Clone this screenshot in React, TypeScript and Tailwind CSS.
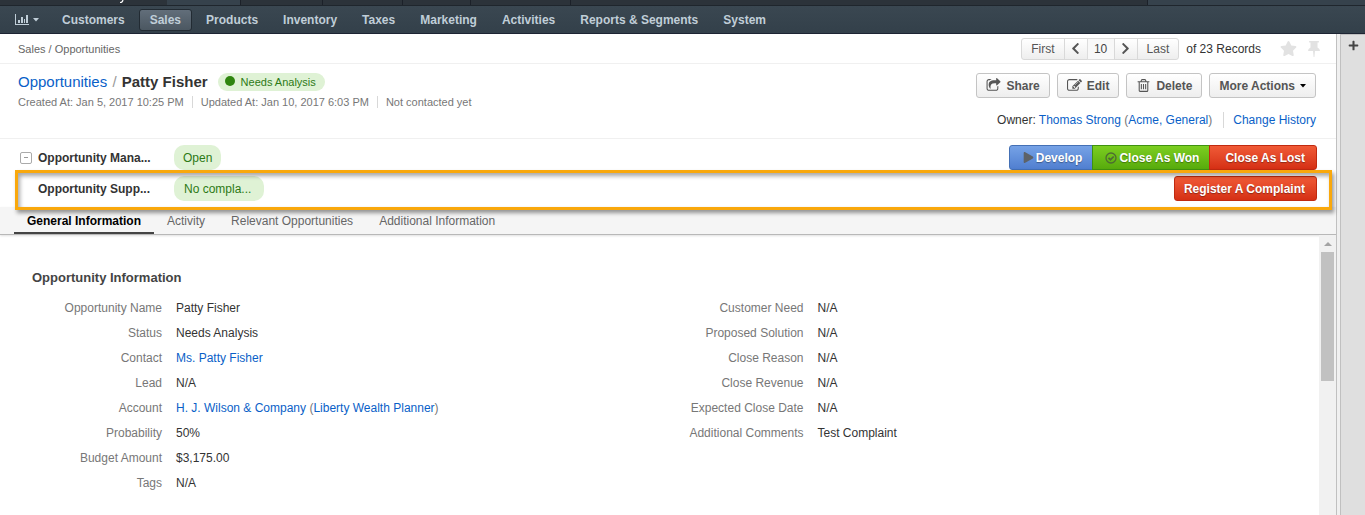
import type { ReactNode } from 'react';
import { FaChevronLeft, FaChevronRight, FaPlay, FaPlus, FaStar } from 'react-icons/fa';

const NAV = ['Customers', 'Sales', 'Products', 'Inventory', 'Taxes', 'Marketing', 'Activities', 'Reports & Segments', 'System'];
const TABS = ['General Information', 'Activity', 'Relevant Opportunities', 'Additional Information'];

type Field = { label: string; value: ReactNode };

const LINK = 'text-[#0a5fc8] hover:underline';

const LEFT: Field[] = [
  { label: 'Opportunity Name', value: 'Patty Fisher' },
  { label: 'Status', value: 'Needs Analysis' },
  { label: 'Contact', value: <a href="#contact" className={LINK}>Ms. Patty Fisher</a> },
  { label: 'Lead', value: 'N/A' },
  {
    label: 'Account',
    value: (
      <>
        <a href="#account" className={LINK}>H. J. Wilson &amp; Company</a>{' '}
        <span className="text-[#777]">(</span>
        <a href="#organization" className={LINK}>Liberty Wealth Planner</a>
        <span className="text-[#777]">)</span>
      </>
    ),
  },
  { label: 'Probability', value: '50%' },
  { label: 'Budget Amount', value: '$3,175.00' },
  { label: 'Tags', value: 'N/A' },
];

const RIGHT: Field[] = [
  { label: 'Customer Need', value: 'N/A' },
  { label: 'Proposed Solution', value: 'N/A' },
  { label: 'Close Reason', value: 'N/A' },
  { label: 'Close Revenue', value: 'N/A' },
  { label: 'Expected Close Date', value: 'N/A' },
  { label: 'Additional Comments', value: 'Test Complaint' },
];

function ChartIcon() {
  return (
    <svg width="15" height="12" viewBox="0 0 15 12" fill="currentColor" aria-hidden="true">
      <path d="M0 0h1v10h13v1H0zM3 6h2v3H3zM6 3h2v6H6zM9 5h1v4H9zM11 1h2v8h-2z" />
    </svg>
  );
}

function Caret() {
  return (
    <svg width="6" height="4" viewBox="0 0 6 4" fill="currentColor" aria-hidden="true">
      <path d="M0 0h6L3 3.5z" />
    </svg>
  );
}

function Glyph({ d }: { d: string }) {
  return (
    <svg width="15" height="15" viewBox="0 0 1792 1792" fill="currentColor" aria-hidden="true">
      <path d={d} />
    </svg>
  );
}

const SHARE =
  'M1472 989v259q0 119-84.5 203.5t-203.5 84.5h-832q-119 0-203.5-84.5t-84.5-203.5v-832q0-119 84.5-203.5t203.5-84.5h255q13 0 22.5 9.5t9.5 22.5q0 27-26 32-77 26-133 60-10 4-16 4h-112q-66 0-113 47t-47 113v832q0 66 47 113t113 47h832q66 0 113-47t47-113v-214q0-19 18-29 28-13 54-37 16-16 35-8 21 9 21 31zm237-496l-384 384q-18 19-45 19-12 0-25-5-39-17-39-59v-192h-160q-323 0-438 131-119 137-74 473 3 23-20 34-8 2-12 2-16 0-26-13-10-14-21-31t-39.5-68.5-49.5-99.5-38.5-114-17.5-122q0-49 3.5-91t14-90 28-88 47-81.5 68.5-74 94.5-61.5 124.500-48.500 159.500-30.500 196.500-11h160v-192q0-42 39-59 13-5 25-5 26 0 45 19l384 384q19 19 19 45t-19 45z';
const EDIT =
  'M888 1184l116-116-152-152-116 116v56h96v96h56zm440-720q-16-16-33 1l-350 350q-17 17-1 33t33-1l350-350q17-17 1-33zm80 594v190q0 119-84.5 203.5t-203.5 84.5h-832q-119 0-203.5-84.5t-84.5-203.5v-832q0-119 84.5-203.5t203.5-84.5h832q63 0 117 25 15 7 18 23 3 17-9 29l-49 49q-14 14-32 8-23-6-45-6h-832q-66 0-113 47t-47 113v832q0 66 47 113t113 47h832q66 0 113-47t47-113v-126q0-13 9-22l64-64q15-15 35-7t20 29zm-96-738l288 288-672 672h-288v-288zm444 132l-92 92-288-288 92-92q28-28 68-28t68 28l152 152q28 28 28 68t-28 68z';
const TRASH =
  'M704 736v576q0 14-9 23t-23 9h-64q-14 0-23-9t-9-23v-576q0-14 9-23t23-9h64q14 0 23 9t9 23zm256 0v576q0 14-9 23t-23 9h-64q-14 0-23-9t-9-23v-576q0-14 9-23t23-9h64q14 0 23 9t9 23zm256 0v576q0 14-9 23t-23 9h-64q-14 0-23-9t-9-23v-576q0-14 9-23t23-9h64q14 0 23 9t9 23zm128 724v-948h-896v948q0 22 7 40.5t14.5 27 10.5 8.5h832q3 0 10.500-8.500t14.500-27 7-40.500zm-672-1076h448l-48-117q-7-9-17-11h-317q-10 2-17 11zm928 32v64q0 14-9 23t-23 9h-96v948q0 83-47 143.500t-113 60.500h-832q-66 0-113-58.500t-47-141.500v-952h-96q-14 0-23-9t-9-23v-64q0-14 9-23t23-9h309l70-167q15-37 54-63t79-26h320q40 0 79 26t54 63l70 167h309q14 0 23 9t9 23z';

function CheckCircle() {
  return (
    <svg width="12" height="12" viewBox="0 0 12 12" fill="none" stroke="currentColor" aria-hidden="true">
      <circle cx="6" cy="6" r="5" strokeWidth="1.300" />
      <path d="M3.500 5.800L5.500 7.700L8.700 4.500" strokeWidth="1.700" />
    </svg>
  );
}

function PinIcon() {
  return (
    <svg width="12" height="16" viewBox="0 0 12 16" fill="currentColor" aria-hidden="true">
      <path d="M1.500 0h9q.5 0 .5.7T10.500 1.500H9.500v5Q12 7.500 12 10H7l-.6 6h-.8L5 10H0q0-2.500 2.500-3.500v-5h-1Q1 1.400 1 .7T1.500 0z" />
    </svg>
  );
}

function ActionButton({ children }: { children: ReactNode }) {
  return (
    <button
      type="button"
      className="flex h-[25px] items-center gap-[5px] rounded-[3px] border border-[#c4c4c4] bg-linear-to-b from-white to-[#eeeeee] px-[9px] font-bold text-[#555]"
    >
      {children}
    </button>
  );
}

function FieldList({ fields }: { fields: Field[] }) {
  return (
    <dl className="min-w-0 flex-1 leading-[25px]">
      {fields.map((f) => (
        <div key={f.label} className="flex gap-[14px]">
          <dt className="w-36 shrink-0 text-right text-[#777]">{f.label}</dt>
          <dd className="text-[#333]">{f.value}</dd>
        </div>
      ))}
    </dl>
  );
}

function Header() {
  return (
    <header className="shrink-0">
      <div className="flex h-[6px] divide-x divide-[#1c2129] border-b border-[#1f262d] bg-[#2c333a]">
        <div className="w-[167px] border-r-0">
          <svg width="167" height="5" viewBox="0 0 167 5" aria-hidden="true">
            <path d="M123 0c-.5 2-1 2.500-3 2.500" stroke="#fff" strokeWidth="1.200" fill="none" />
          </svg>
        </div>
        <div className="w-[74px] bg-[#36424c]" />
        <div className="w-[82px]" />
        <div className="w-20" />
        <div className="w-[68px]" />
        <div className="w-[100px]" />
        <div className="flex-1" />
        <div className="w-[217px] bg-[#36424c]" />
      </div>
      <nav className="flex h-7 items-center gap-[3px] border-b border-[#1d2433] bg-linear-to-b from-[#3a4751] to-[#33404a] pl-[15px] font-bold text-[#c0ced8]">
        <button type="button" aria-label="Dashboards" className="mr-[9px] flex items-center gap-[3px]">
          <ChartIcon />
          <Caret />
        </button>
        {NAV.map((item) => (
          <a
            key={item}
            href="#nav"
            className={
              item === 'Sales'
                ? 'rounded-[3px] border border-[#222b33] bg-linear-to-b from-[#626e7a] to-[#4b5761] px-[10px] leading-5'
                : 'rounded-[3px] border border-transparent px-[10px] leading-5'
            }
          >
            {item}
          </a>
        ))}
      </nav>
    </header>
  );
}

function Breadcrumbs() {
  const page = 'h-[22px] border border-[#d9d9d9] bg-linear-to-b from-white to-[#eeeeee] text-[#555]';
  return (
    <div className="flex h-[30px] items-center justify-between border-b border-[#f0f0f0] pr-[16px] pl-[18px]">
      <div className="text-[11px] text-[#666]">
        <a href="#sales">Sales</a> / <a href="#opportunities">Opportunities</a>
      </div>
      <div className="flex items-center">
        <button type="button" className={`${page} rounded-l-[3px] px-[9px]`}>First</button>
        <button type="button" aria-label="Previous" className={`${page} -ml-px flex w-6 items-center justify-center`}>
          <FaChevronLeft size={13} />
        </button>
        <input
          aria-label="Record number"
          defaultValue="10"
          className="-ml-px h-[22px] w-7 border border-[#dddddd] bg-[#f8f8f8] text-center text-[#444]"
        />
        <button type="button" aria-label="Next" className={`${page} -ml-px flex w-6 items-center justify-center`}>
          <FaChevronRight size={13} />
        </button>
        <button type="button" className={`${page} -ml-px rounded-r-[3px] px-[9px]`}>Last</button>
        <span className="ml-[7px] text-[#333]">of 23 Records</span>
        <button type="button" aria-label="Favorite" className="ml-[19px] text-[#e2e2e2]"><FaStar size={17} /></button>
        <button type="button" aria-label="Pin" className="ml-[11px] text-[#e2e2e2]"><PinIcon /></button>
      </div>
    </div>
  );
}

function TitleBar() {
  return (
    <div className="flex h-[75px] items-start justify-between border-b border-[#f0f0f0] pr-5 pl-[18px]">
      <div className="pt-2">
        <div className="flex items-center gap-[10px]">
          <h1 className="text-[15px] leading-5 font-bold text-[#333]">
            <a href="#opportunities" className="font-normal text-[#0a5fc8]">Opportunities</a>
            <span className="mx-px font-normal text-[#999]"> / </span>
            Patty Fisher
          </h1>
          <span className="flex h-[18px] items-center gap-[6px] rounded-full bg-[#dff2d5] pr-[9px] pl-[7px] text-[11px] text-[#2d7a16]">
            <span className="mb-[3px] size-[10px] rounded-full bg-[#2f850f]" />
            Needs Analysis
          </span>
        </div>
        <div className="mt-1 flex divide-x divide-[#d8d8d8] text-[11px] leading-3 text-[#777]">
          <span className="pr-[8px]">Created At: Jan 5, 2017 10:25 PM</span>
          <span className="px-[8px]">Updated At: Jan 10, 2017 6:03 PM</span>
          <span className="pl-[8px]">Not contacted yet</span>
        </div>
      </div>
      <div className="flex flex-col items-end gap-[14px] pt-[9px]">
        <div className="flex gap-[7px]">
          <ActionButton><Glyph d={SHARE} />Share</ActionButton>
          <ActionButton><Glyph d={EDIT} />Edit</ActionButton>
          <ActionButton><Glyph d={TRASH} />Delete</ActionButton>
          <ActionButton>More Actions<span className="text-black"><Caret /></span></ActionButton>
        </div>
        <div className="flex divide-x divide-[#d8d8d8] leading-4 text-[#333]">
          <span className="pr-[11px]">
            Owner: <a href="#owner" className={LINK}>Thomas Strong</a> <span className="text-[#777]">(</span>
            <a href="#unit" className={LINK}>Acme, General</a><span className="text-[#777]">)</span>
          </span>
          <a href="#history" className="pl-[9px] text-[#0a5fc8]">Change History</a>
        </div>
      </div>
    </div>
  );
}

function Workflows() {
  const btn = 'flex h-[25px] items-center border font-bold text-white [text-shadow:0_1px_1px_rgba(0,0,0,0.35)]';
  const red = 'border-[#c02a10] bg-linear-to-b from-[#f05a36] to-[#d52f14]';
  const pill = 'flex h-[25px] items-center rounded-[10px] bg-[#dff2d5] text-[#2d7a16]';
  return (
    <div className="flex h-[68px] flex-col gap-[6px] pt-[6px] pr-[19px] pl-5">
      <div className="flex items-center">
        <button
          type="button"
          aria-label="Collapse"
          className="flex size-3 items-center justify-center rounded-[2px] border border-[#aaa]"
        >
          <span className="h-px w-1 bg-[#999]" />
        </button>
        <span className="ml-[6px] w-[136px] font-bold text-[#333]">Opportunity Mana...</span>
        <span className={`${pill} px-[9px]`}>Open</span>
        <div className="ml-auto flex">
          <button type="button" className={`${btn} gap-[2px] rounded-l-[3px] border-[#4470b5] bg-linear-to-b from-[#76a2e6] to-[#507fd0] pr-[10px] pl-[13px]`}>
            <span className="text-[#5d6268]"><FaPlay size={11} /></span>
            Develop
          </button>
          <button type="button" className={`${btn} -ml-px gap-[2px] border-[#3f9210] bg-linear-to-b from-[#7cce20] to-[#57ab0c] pr-[10px] pl-[12px]`}>
            <span className="text-[#4d6b32]"><CheckCircle /></span>
            Close As Won
          </button>
          <button type="button" className={`${btn} ${red} -ml-px rounded-r-[3px] pr-[11px] pl-[15px]`}>Close As Lost</button>
        </div>
      </div>
      <div className="relative flex items-center">
        <span className="ml-[18px] w-[136px] font-bold text-[#333]">Opportunity Supp...</span>
        <span className={`${pill} pr-[13px] pl-[10px]`}>No compla...</span>
        <button type="button" className={`${btn} ${red} ml-auto rounded-[3px] pr-[11px] pl-[9px]`}>Register A Complaint</button>
        <div className="pointer-events-none absolute -top-[6px] -right-[15px] -left-[5px] h-10 border-3 border-[#f9a80c] shadow-[2px_3px_4px_rgba(0,0,0,0.4),inset_2px_3px_4px_rgba(0,0,0,0.35)]" />
      </div>
    </div>
  );
}

export default function App() {
  return (
    <div className="flex h-screen flex-col bg-white font-['Liberation_Sans',Arial,sans-serif] text-[12px] leading-4 text-[#333]">
      <Header />
      <div className="flex min-h-0 flex-1">
        <main className="flex min-w-0 flex-1 flex-col">
          <Breadcrumbs />
          <TitleBar />
          <Workflows />
          <div role="tablist" className="flex h-7 shrink-0 items-stretch border-b border-[#b8b8b8] bg-[#f5f5f5] pl-[14px] shadow-[0_1px_2px_rgba(0,0,0,0.12)]">
            {TABS.map((tab, i) => (
              <button
                key={tab}
                type="button"
                role="tab"
                aria-selected={i === 0}
                className={
                  i === 0
                    ? 'border-b-2 border-[#444] px-[13px] pt-[2px] font-bold text-black'
                    : 'border-b-2 border-transparent px-[13px] pt-[2px] text-[#666]'
                }
              >
                {tab}
              </button>
            ))}
          </div>
          <div className="flex min-h-0 flex-1">
            <section className="min-w-0 flex-1 overflow-hidden px-[18px] pt-[35px]">
              <h2 className="pl-[14px] text-[13px] font-bold text-[#444]">Opportunity Information</h2>
              <div className="mt-[10px] flex">
                <FieldList fields={LEFT} />
                <FieldList fields={RIGHT} />
              </div>
            </section>
            <div className="flex w-[17px] shrink-0 flex-col items-center bg-[#f1f1f1]" aria-hidden="true">
              <div className="flex h-[17px] items-center text-[#a3a3a3]">
                <svg width="8" height="4" viewBox="0 0 8 4" fill="currentColor"><path d="M0 4h8L4 0z" /></svg>
              </div>
              <div className="h-[129px] w-[13px] bg-[#c1c1c1]" />
            </div>
          </div>
        </main>
        <aside className="flex w-[29px] shrink-0 border-l border-[#c0c0c0] bg-[#f0f0f0] pl-[3px]">
          <div className="flex flex-1 flex-col items-center border-t border-l border-[#c0c0c0] bg-[#dfdfdf] pt-[5px]">
            <button type="button" aria-label="Add widget" className="text-[#444]"><FaPlus size={11} /></button>
          </div>
        </aside>
      </div>
    </div>
  );
}
